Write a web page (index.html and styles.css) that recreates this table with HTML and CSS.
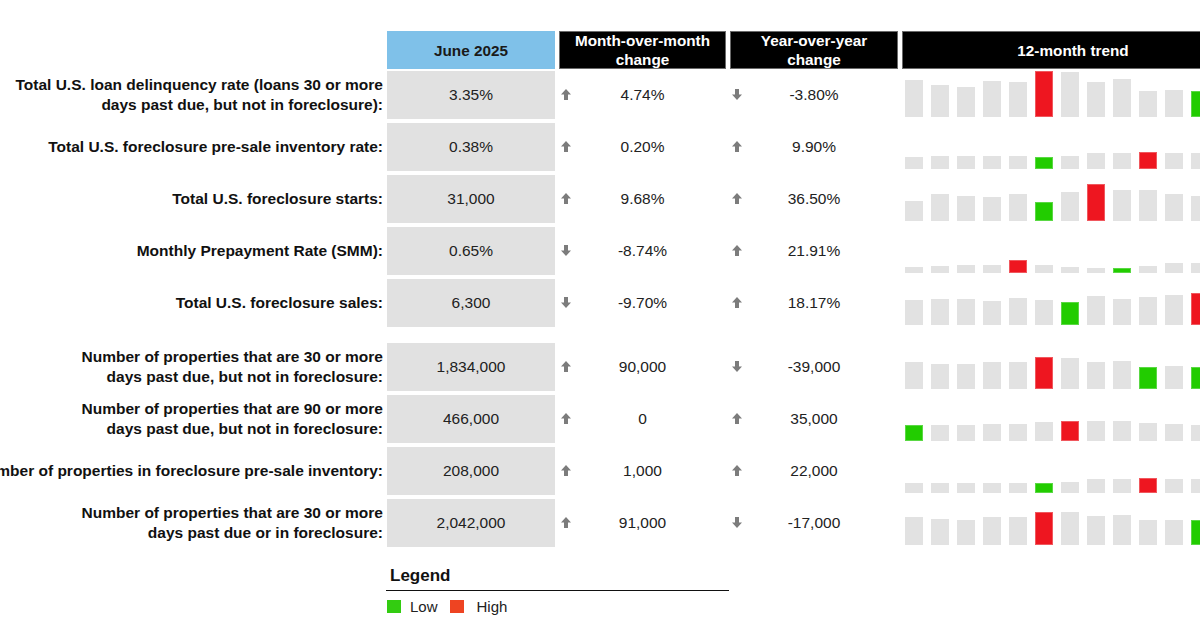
FILE: index.html
```html
<!DOCTYPE html>
<html>
<head>
<meta charset="utf-8">
<link rel="stylesheet" href="styles.css">
</head>
<body>
<div class="page">
  <div class="table">
    <div class="row head">
      <div class="label"></div>
      <div class="hcell blue">June 2025</div>
      <div class="hcell dark">Month-over-month<br>change</div>
      <div class="hcell dark">Year-over-year<br>change</div>
      <div class="hcell dark trend-head">12-month trend</div>
    </div>

    <div class="row">
      <div class="label">Total U.S. loan delinquency rate (loans 30 or more<br>days past due, but not in foreclosure):</div>
      <div class="val">3.35%</div>
      <div class="chg"><svg class="arr" viewBox="0 0 10 11"><polygon points="5,0 10,5.5 7,5.5 7,11 3,11 3,5.5 0,5.5"/></svg><span>4.74%</span></div>
      <div class="chg"><svg class="arr" viewBox="0 0 10 11"><polygon points="5,11 10,5.5 7,5.5 7,0 3,0 3,5.5 0,5.5"/></svg><span>-3.80%</span></div>
      <div class="trend">
        <i style="height:37px"></i><i style="height:32px"></i><i style="height:30px"></i><i style="height:36px"></i><i style="height:35px"></i><i class="hi" style="height:46px"></i><i style="height:45px"></i><i style="height:35px"></i><i style="height:38px"></i><i style="height:26px"></i><i style="height:27px"></i><i class="lo" style="height:26px"></i>
      </div>
    </div>

    <div class="row">
      <div class="label">Total U.S. foreclosure pre-sale inventory rate:</div>
      <div class="val">0.38%</div>
      <div class="chg"><svg class="arr" viewBox="0 0 10 11"><polygon points="5,0 10,5.5 7,5.5 7,11 3,11 3,5.5 0,5.5"/></svg><span>0.20%</span></div>
      <div class="chg"><svg class="arr" viewBox="0 0 10 11"><polygon points="5,0 10,5.5 7,5.5 7,11 3,11 3,5.5 0,5.5"/></svg><span>9.90%</span></div>
      <div class="trend">
        <i style="height:12px"></i><i style="height:13px"></i><i style="height:13px"></i><i style="height:13px"></i><i style="height:13px"></i><i class="lo" style="height:12px"></i><i style="height:13px"></i><i style="height:16px"></i><i style="height:16px"></i><i class="hi" style="height:17px"></i><i style="height:16px"></i><i style="height:16px"></i>
      </div>
    </div>

    <div class="row">
      <div class="label">Total U.S. foreclosure starts:</div>
      <div class="val">31,000</div>
      <div class="chg"><svg class="arr" viewBox="0 0 10 11"><polygon points="5,0 10,5.5 7,5.5 7,11 3,11 3,5.5 0,5.5"/></svg><span>9.68%</span></div>
      <div class="chg"><svg class="arr" viewBox="0 0 10 11"><polygon points="5,0 10,5.5 7,5.5 7,11 3,11 3,5.5 0,5.5"/></svg><span>36.50%</span></div>
      <div class="trend">
        <i style="height:20px"></i><i style="height:27px"></i><i style="height:25px"></i><i style="height:24px"></i><i style="height:27px"></i><i class="lo" style="height:19px"></i><i style="height:29px"></i><i class="hi" style="height:37px"></i><i style="height:31px"></i><i style="height:31px"></i><i style="height:27px"></i><i style="height:25px"></i>
      </div>
    </div>

    <div class="row">
      <div class="label">Monthly Prepayment Rate (SMM):</div>
      <div class="val">0.65%</div>
      <div class="chg"><svg class="arr" viewBox="0 0 10 11"><polygon points="5,11 10,5.5 7,5.5 7,0 3,0 3,5.5 0,5.5"/></svg><span>-8.74%</span></div>
      <div class="chg"><svg class="arr" viewBox="0 0 10 11"><polygon points="5,0 10,5.5 7,5.5 7,11 3,11 3,5.5 0,5.5"/></svg><span>21.91%</span></div>
      <div class="trend">
        <i style="height:6px"></i><i style="height:7px"></i><i style="height:8px"></i><i style="height:8px"></i><i class="hi" style="height:13px"></i><i style="height:8px"></i><i style="height:6px"></i><i style="height:5px"></i><i class="lo" style="height:5px"></i><i style="height:7px"></i><i style="height:10px"></i><i style="height:10px"></i>
      </div>
    </div>

    <div class="row">
      <div class="label">Total U.S. foreclosure sales:</div>
      <div class="val">6,300</div>
      <div class="chg"><svg class="arr" viewBox="0 0 10 11"><polygon points="5,11 10,5.5 7,5.5 7,0 3,0 3,5.5 0,5.5"/></svg><span>-9.70%</span></div>
      <div class="chg"><svg class="arr" viewBox="0 0 10 11"><polygon points="5,0 10,5.5 7,5.5 7,11 3,11 3,5.5 0,5.5"/></svg><span>18.17%</span></div>
      <div class="trend">
        <i style="height:25px"></i><i style="height:26px"></i><i style="height:26px"></i><i style="height:24px"></i><i style="height:27px"></i><i style="height:25px"></i><i class="lo" style="height:23px"></i><i style="height:29px"></i><i style="height:26px"></i><i style="height:28px"></i><i style="height:30px"></i><i class="hi" style="height:32px"></i>
      </div>
    </div>

    <div class="row group-start">
      <div class="label">Number of properties that are 30 or more<br>days past due, but not in foreclosure:</div>
      <div class="val">1,834,000</div>
      <div class="chg"><svg class="arr" viewBox="0 0 10 11"><polygon points="5,0 10,5.5 7,5.5 7,11 3,11 3,5.5 0,5.5"/></svg><span>90,000</span></div>
      <div class="chg"><svg class="arr" viewBox="0 0 10 11"><polygon points="5,11 10,5.5 7,5.5 7,0 3,0 3,5.5 0,5.5"/></svg><span>-39,000</span></div>
      <div class="trend">
        <i style="height:27px"></i><i style="height:25px"></i><i style="height:25px"></i><i style="height:27px"></i><i style="height:27px"></i><i class="hi" style="height:32px"></i><i style="height:31px"></i><i style="height:27px"></i><i style="height:28px"></i><i class="lo" style="height:22px"></i><i style="height:23px"></i><i class="lo" style="height:22px"></i>
      </div>
    </div>

    <div class="row">
      <div class="label">Number of properties that are 90 or more<br>days past due, but not in foreclosure:</div>
      <div class="val">466,000</div>
      <div class="chg"><svg class="arr" viewBox="0 0 10 11"><polygon points="5,0 10,5.5 7,5.5 7,11 3,11 3,5.5 0,5.5"/></svg><span>0</span></div>
      <div class="chg"><svg class="arr" viewBox="0 0 10 11"><polygon points="5,0 10,5.5 7,5.5 7,11 3,11 3,5.5 0,5.5"/></svg><span>35,000</span></div>
      <div class="trend">
        <i class="lo" style="height:16px"></i><i style="height:16px"></i><i style="height:16px"></i><i style="height:17px"></i><i style="height:17px"></i><i style="height:19px"></i><i class="hi" style="height:20px"></i><i style="height:20px"></i><i style="height:20px"></i><i style="height:18px"></i><i style="height:17px"></i><i style="height:16px"></i>
      </div>
    </div>

    <div class="row">
      <div class="label">Number of properties in foreclosure pre-sale inventory:</div>
      <div class="val">208,000</div>
      <div class="chg"><svg class="arr" viewBox="0 0 10 11"><polygon points="5,0 10,5.5 7,5.5 7,11 3,11 3,5.5 0,5.5"/></svg><span>1,000</span></div>
      <div class="chg"><svg class="arr" viewBox="0 0 10 11"><polygon points="5,0 10,5.5 7,5.5 7,11 3,11 3,5.5 0,5.5"/></svg><span>22,000</span></div>
      <div class="trend">
        <i style="height:10px"></i><i style="height:10px"></i><i style="height:10px"></i><i style="height:10px"></i><i style="height:10px"></i><i class="lo" style="height:10px"></i><i style="height:11px"></i><i style="height:14px"></i><i style="height:14px"></i><i class="hi" style="height:15px"></i><i style="height:14px"></i><i style="height:14px"></i>
      </div>
    </div>

    <div class="row">
      <div class="label">Number of properties that are 30 or more<br>days past due or in foreclosure:</div>
      <div class="val">2,042,000</div>
      <div class="chg"><svg class="arr" viewBox="0 0 10 11"><polygon points="5,0 10,5.5 7,5.5 7,11 3,11 3,5.5 0,5.5"/></svg><span>91,000</span></div>
      <div class="chg"><svg class="arr" viewBox="0 0 10 11"><polygon points="5,11 10,5.5 7,5.5 7,0 3,0 3,5.5 0,5.5"/></svg><span>-17,000</span></div>
      <div class="trend">
        <i style="height:28px"></i><i style="height:26px"></i><i style="height:25px"></i><i style="height:28px"></i><i style="height:28px"></i><i class="hi" style="height:33px"></i><i style="height:33px"></i><i style="height:29px"></i><i style="height:30px"></i><i style="height:25px"></i><i style="height:25px"></i><i class="lo" style="height:25px"></i>
      </div>
    </div>
  </div>

  <div class="legend">
    <div class="legend-title">Legend</div>
    <div class="legend-items">
      <span class="sw sw-lo"></span><span class="legend-text lt-lo">Low</span>
      <span class="sw sw-hi"></span><span class="legend-text lt-hi">High</span>
    </div>
  </div>
</div>
</body>
</html>
```

FILE: styles.css
```css
html, body {
  margin: 0;
  padding: 0;
  background: #ffffff;
}

body {
  font-family: "Liberation Sans", Arial, sans-serif;
  color: #111;
  width: 1200px;
  height: 630px;
  overflow: hidden;
}

.page {
  padding-top: 31px;
}

.table {
  display: flex;
  flex-direction: column;
  gap: 4px;
  width: 1244px;
}

.row {
  display: grid;
  grid-template-columns: 383px 168px 167px 168px 342px;
  column-gap: 4px;
  height: 48px;
}

.row.head {
  height: 37px;
  margin-bottom: -1px;
}

.row.group-start {
  margin-top: 12px;
}

.label {
  display: flex;
  align-items: center;
  justify-content: flex-end;
  text-align: right;
  white-space: nowrap;
  font-weight: bold;
  font-size: 15.5px;
  line-height: 20px;
  padding-right: 0;
  color: #111;
  min-width: 0;
}

.hcell {
  display: flex;
  align-items: center;
  justify-content: center;
  text-align: center;
  font-weight: bold;
  font-size: 15.3px;
  line-height: 19px;
}

.hcell.blue {
  background: #7fc1e9;
  color: #1a1a1a;
}

.hcell.dark {
  background: #000;
  color: #fff;
  box-shadow: inset 0 0 0 1px #6a6a6a;
}

.val {
  background: #e1e1e1;
  display: flex;
  align-items: center;
  justify-content: center;
  font-size: 15.5px;
  color: #222;
}

.chg {
  display: grid;
  grid-template-columns: 1fr auto 1fr;
  align-items: center;
  font-size: 15.5px;
  color: #222;
}

.chg .arr {
  width: 10px;
  height: 11px;
  fill: #7c7c7c;
  justify-self: start;
  margin-left: 2px;
  margin-top: -1px;
}

.trend {
  display: flex;
  align-items: flex-end;
  gap: 8px;
  padding: 0 0 2px 3px;
  overflow: hidden;
}

.trend i {
  display: block;
  flex: 0 0 18px;
  width: 18px;
  background: #e2e2e2;
}

.trend i.hi {
  background: #ee1620;
  box-shadow: inset 0 0 0 1px #f0585e;
}

.trend i.lo {
  background: #22cc00;
  box-shadow: inset 0 0 0 1px #5ad844;
}

.legend {
  margin-left: 386px;
  margin-top: 19px;
  width: 343px;
}

.legend-title {
  font-weight: bold;
  font-size: 17px;
  line-height: 20px;
  padding-left: 4px;
  padding-bottom: 4px;
  border-bottom: 1px solid #111;
  color: #111;
}

.legend-items {
  display: flex;
  align-items: center;
  padding-top: 7px;
  padding-left: 1px;
  font-size: 15px;
  color: #222;
}

.sw {
  display: block;
  width: 14px;
  height: 13px;
}

.sw-lo {
  background: #33cc11;
}

.sw-hi {
  background: #ee4422;
}

.lt-lo {
  margin-left: 9px;
  margin-right: 12px;
}

.lt-hi {
  margin-left: 13px;
}
```
